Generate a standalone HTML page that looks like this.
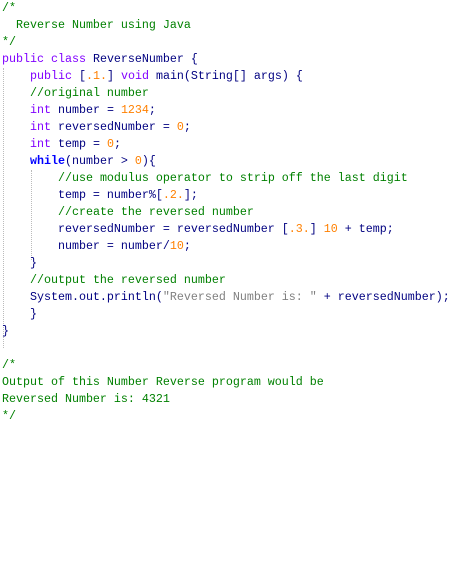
<!DOCTYPE html>
<html><head><style>
body{margin:0;background:#fff;width:452px;height:585px;overflow:hidden;position:relative}
pre{margin:0;position:absolute;left:2px;top:0px;font-family:"Liberation Mono",monospace;font-size:11.67px;line-height:17px;color:#000080;}
.k{color:#8000ff}.b{color:#0000ff;font-weight:bold}.c{color:#008000}.n{color:#ff8000}.s{color:#808080}
.g{position:absolute;border-left:1px dotted #bbb}
</style></head><body>
<div class="g" style="left:3px;top:68px;height:280px"></div>
<div class="g" style="left:31px;top:170px;height:90px"></div>
<pre><span class="c">/*
  Reverse Number using Java
*/</span>
<span class="k">public class</span> ReverseNumber {
    <span class="k">public</span> [<span class="n">.1.</span>] <span class="k">void</span> main(String[] args) {
    <span class="c">//original number</span>
    <span class="k">int</span> number = <span class="n">1234</span>;
    <span class="k">int</span> reversedNumber = <span class="n">0</span>;
    <span class="k">int</span> temp = <span class="n">0</span>;
    <span class="b">while</span>(number &gt; <span class="n">0</span>){
        <span class="c">//use modulus operator to strip off the last digit</span>
        temp = number%[<span class="n">.2.</span>];
        <span class="c">//create the reversed number</span>
        reversedNumber = reversedNumber [<span class="n">.3.</span>] <span class="n">10</span> + temp;
        number = number/<span class="n">10</span>;
    }
    <span class="c">//output the reversed number</span>
    System.out.println(<span class="s">"Reversed Number is: "</span> + reversedNumber);
    }
}

<span class="c">/*
Output of this Number Reverse program would be
Reversed Number is: 4321
*/</span></pre>
</body></html>
